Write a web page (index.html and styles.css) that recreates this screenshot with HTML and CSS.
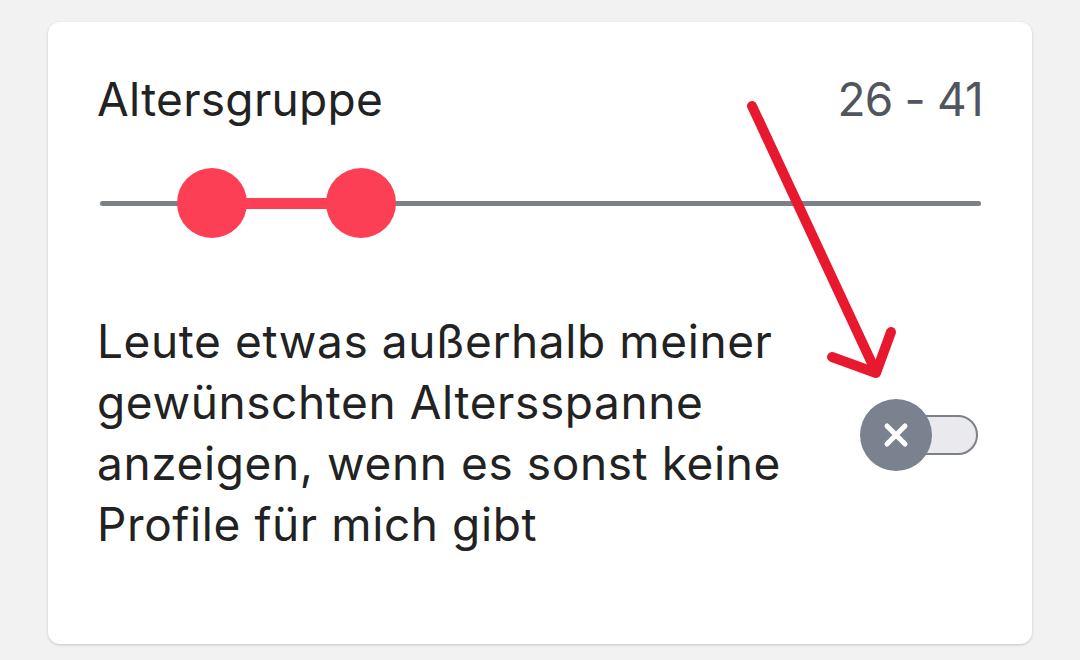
FILE: index.html
```html
<!DOCTYPE html>
<html lang="de">
<head>
  <meta charset="utf-8">
  <title>Altersgruppe</title>
  <link rel="stylesheet" href="styles.css">
</head>
<body>
  <div class="card">
    <div class="header">
      <span class="label">Altersgruppe</span>
      <span class="range" id="range">26 - 41</span>
    </div>

    <div class="slider">
      <div class="track"></div>
      <div class="fill" style="left: 112px; width: 149px;"></div>
      <div class="thumb" style="left: 112px;"></div>
      <div class="thumb" style="left: 261px;"></div>
    </div>

    <div class="option">
      <p class="option-text">Leute etwas außerhalb meiner gewünschten Altersspanne anzeigen, wenn es sonst keine Profile für mich gibt</p>
      <div class="toggle">
        <div class="knob">
          <svg width="28" height="28" viewBox="0 0 28 28">
            <path d="M5 5 L23 23 M23 5 L5 23" stroke="#fff" stroke-width="5" stroke-linecap="round"/>
          </svg>
        </div>
      </div>
    </div>
  </div>

  <!-- hand-drawn pointer -->
  <svg class="arrow" width="1080" height="660" viewBox="0 0 1080 660">
    <g fill="none" stroke="#e8192f" stroke-width="10" stroke-linecap="round" stroke-linejoin="round">
      <path d="M752 106 L876 372"/>
      <path d="M832 357 L876 373 L891 332"/>
    </g>
  </svg>
</body>
</html>
```

FILE: styles.css
```css
body {
  margin: 0;
  background: #f2f2f2;
  font-family: Inter, Lato, sans-serif;
  height: 660px;
  overflow: hidden;
}

.card {
  margin: 22px 48px;
  height: 622px;
  box-sizing: border-box;
  background: #fff;
  border-radius: 12px;
  box-shadow: 0 1px 3px rgba(0,0,0,0.18);
  padding: 49px 49px 0 49px;
}

.header {
  display: flex;
  justify-content: space-between;
  align-items: baseline;
  font-size: 46px;
  line-height: 56px;
}

.label {
  color: #222;
  letter-spacing: 0.3px;
}

.range {
  color: #50555e;
  letter-spacing: -0.8px;
}

.slider {
  position: relative;
  height: 72px;
  margin: 40px 2px 0 3px;
}

.track {
  position: absolute;
  left: 0;
  right: 0;
  top: 34px;
  height: 5px;
  border-radius: 3px;
  background: #7b8189;
}

.fill {
  position: absolute;
  top: 31px;
  height: 11px;
  background: #fd3f55;
}

.thumb {
  position: absolute;
  top: 1px;
  width: 70px;
  height: 70px;
  margin-left: -35px;
  border-radius: 50%;
  background: #fd3f55;
}

.option {
  display: flex;
  align-items: center;
  justify-content: space-between;
  margin-top: 72px;
}

.option-text {
  margin: 0;
  width: 750px;
  font-size: 46px;
  line-height: 61px;
  letter-spacing: 0.6px;
  color: #222;
}

.toggle {
  position: relative;
  width: 116px;
  height: 40px;
  box-sizing: border-box;
  border: 2px solid #7b8189;
  border-radius: 20px;
  background: #e9e9ee;
  margin: 4px 5px 0 0;
}

.knob {
  position: absolute;
  left: -4px;
  top: -18px;
  width: 72px;
  height: 72px;
  border-radius: 50%;
  background: #7a8290;
  display: flex;
  align-items: center;
  justify-content: center;
}

.arrow {
  position: absolute;
  left: 0;
  top: 0;
  pointer-events: none;
}
```
